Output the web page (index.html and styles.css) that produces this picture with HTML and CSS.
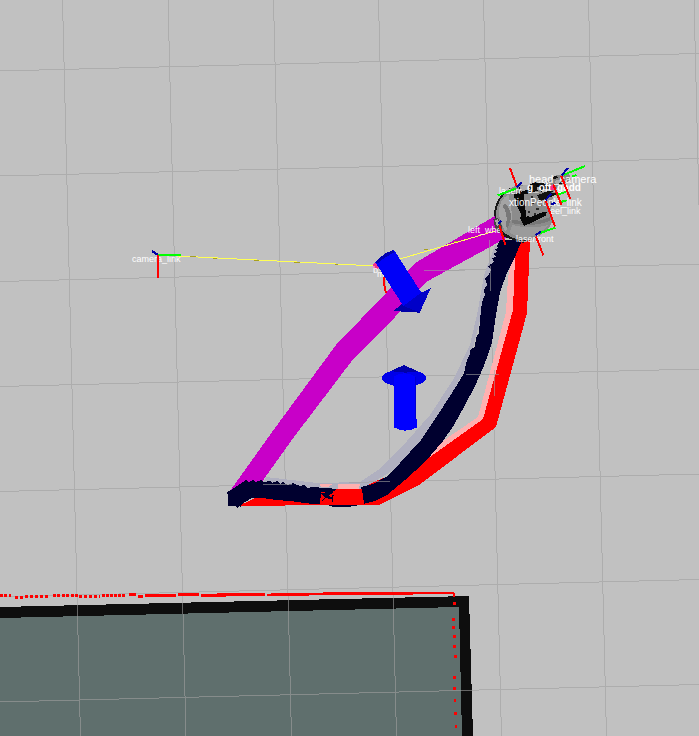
FILE: index.html
```
<!DOCTYPE html>
<html lang="en">
<head>
<meta charset="utf-8">
<title>Robot navigation view</title>
<link rel="stylesheet" href="styles.css">
</head>
<body>
<main class="view">
<svg class="scene" viewBox="0 0 699 736" role="img" aria-label="Robot navigation map">
  <!-- occupancy map -->
  <path class="wall" d="M0 607L469 596 473 736H0z"/>
  <path class="unknown" d="M0 618L459 607 462 736H0z"/>

  <!-- ground grid -->
  <path class="grid" d="M62.5 0L80.5 736M168 0L186 736M273.5 0L291.5 736M378.5 0L396.5 736M483.5 0L501.5 736M588.5 0L606.5 736M694 0L712 736M0 71L699 53.500M0 176L699 158.500M0 281.500L699 264M0 386.500L699 369M0 491.500L699 474M0 597L699 579.500M0 702L699 684.500"/>

  <!-- laser scan -->
  <path class="scan dots" stroke-dasharray="3 1 3 2" d="M0 595.500H11M53 595.500H78"/>
  <path class="scan dots" stroke-dasharray="3 2" d="M15 597.500H23M25 596.500H48M79 596.500H100"/>
  <path class="scan dots" stroke-dasharray="3 1" d="M102 595.500H126"/>
  <path class="scan dots" d="M129 594.500H136M138 596.500H143M145 595.500H176M178 594.500H199M201 595.500H226M217 594.500H265"/>
  <path class="scan" d="M267 595H309M271 594H413M323 593H454M454 593V597"/>
  <path class="scan dots" d="M453 603H456M452 619H455M452 627H455M453 636.500H456M453 646.500H456M454 656.500H457M453 677.500H456M453 688.500H456M454 700.500H456M454 713.500H457M455 726.500H457"/>

  <!-- planned paths -->
  <path class="magenta" d="M500 213L415 263 387 292 336 345 272 432 230 491 237 506 261 483 294 437 354 358 395 317 426 282 510 236z"/>
  <path class="pink" d="M514 250L508 277 506 312 478 417 437 445 420 465 440 460 486 421 514 313 520 250z"/>
  <path class="red" d="M515 240L515 257 513 310 483 419 423 462 361 487 337 489 320 487 260 496 238 506 380 504.500 419 485 496 427 527 313 530 240z"/>
  <path class="halo" d="M495 245L484 275 478 310 470 345 453 380 430 415 400 449 378 470 360 482 317 483 266 477 262 484 313 489 362 489 400 466 435 425 470 360 485 300 500 250z"/>
  <path class="pink" d="M320 484H333L328 487H321zM338 484H360L359 489H338z"/>
  <path class="navy" d="M500 240L497 246 498 248 495 249 497 252 493 254 496 257 492 258 494 262 488 266 491 270 488 276 485 278 487 285 484 290 485 295 482 302 480 320 479 333 476 338 475 347 470 350 470 354 467 360 464 373 457 385 439 413 421 440 400 463 386 477 373 484 361 487 363 504 375 501 387 495 405 480 425 462 443 441 454 425 465 405 475 386 483 368 488 355 492 343 496 315 500 292 507 273 515 257 522 240z"/>
  <path class="navy" d="M243 482L246 480 249 482 253 480 256 482 261 480 263 482 270 481 272 483 277 481 280 484 283 482 288 485 293 483 300 486 304 485 307 488 313 487 325 488 338 489 337 492 333 494 334 501 331 499 325 502 330 496 322 496 329 493 321 492 320 504 313 504 290 501 276 500 263 498 252 498 242 504 241 507 239 506 238 509 235 506 228 506 228 495 226 493 231 490zM328 505H360L348 507H333z"/>
  <path class="red" d="M337 489H362L364 504H321V494L326 499 331 493z"/>
  <path class="navy" d="M320 493L325 493 328 490 334 492 328 496 331 497 334 495 332 499 334 500 326 498 322 501 325 497zM332 495H333V502H332z"/>
  <path class="grid" d="M263 484.500L293 484M349 483L390 481M424 271L466 270M489 240L491 291M466 375L500 374M494 370L494 396"/>

  <!-- transform tree links -->
  <path class="link" d="M158 255L376 266M400 259L495 231"/>
  <path class="link tick" d="M190 256.500H196M213 258H217M254 260H259M294 262H300M335 264H338M424 250L428 249M454 242L458 241"/>
  <circle class="joint" cx="376" cy="266" r="3"/>
  <path class="axis-x" d="M384 277V284L386 293"/>
  <g class="label">
    <text x="373" y="273">b</text>
    <text x="377" y="277">m</text>
  </g>

  <!-- pose arrows -->
  <g transform="translate(350 230) scale(.3333)">
    <path fill="#0000a8" d="M130 243L160 218 242 175 209 248z"/>
    <path fill="#0000c8" d="M160 228L212 188 242 176 209 247z"/>
    <path fill="#0000f8" d="M76 97L132 60 214 188 160 228z"/>
    <path fill="#0000b0" d="M76 97L86 85 107 70 129 60 134 66 103 84 83 100z"/>
  </g>
  <g transform="translate(370 350) scale(.3333)">
    <ellipse fill="#0000e8" cx="102" cy="84" rx="66" ry="26"/>
    <path fill="#0000a8" d="M62 63L102 45 143 64Q103 72 62 63z"/>
    <path fill="#00f" d="M72 80Q103 60 136 80V207H141V232Q103 252 72 232z"/>
    <path fill="#0000d0" d="M134 82H137V207H134z"/>
  </g>

  <!-- robot -->
  <g transform="translate(460 150) scale(.3333)">
    <path fill="#181818" d="M102 194Q103 145 148 114L180 110 200 230 212 270 190 279 135 262 115 235z"/>
    <path fill="#8c8c8c" d="M107 194Q112 145 150 116Q180 98 215 106L278 142 272 195 278 215Q260 250 215 270Q175 276 145 256Q120 246 107 194z"/>
    <path fill="#a4a4a4" d="M116 185Q120 146 145 134Q155 172 157 205Q145 225 137 245Q120 220 116 185z"/>
    <path fill="#787878" d="M135 160Q155 180 153 205L143 235 137 228Q146 196 128 168zM157 209Q220 222 272 201L270 212Q215 234 155 219z"/>
    <path fill="#9b9b9b" d="M158 225Q210 240 264 225Q245 250 212 260Q170 266 148 246z"/>
    <path fill="#080808" d="M160 134L190 124 199 200 232 188 260 186 258 197 193 228 180 205 184 195 171 168zM176 113L205 106 230 94 255 108 247 125 185 134z"/>
    <path fill="#8a8a8a" d="M199 132L240 120 265 145 252 185 207 203z"/>
    <path fill="#858585" d="M252 97L275 90 282 78 326 68 334 90 302 105 275 130z"/>
    <path fill="#aaa" d="M178 108L207 104 210 117 182 126zM230 111L248 108 250 117 232 121zM284 93L304 87 312 96 288 103z"/>
    <path fill="#111" d="M232 136L272 120 292 133 240 154zM207 108L228 104 232 120 211 124zM234 99L256 101 270 116 244 118zM278 82L291 76 294 83 282 89zM300 92L314 97 298 104zM170 142H178V149H170zM176 165H184V172H176z"/>
    <path fill="#2a2a2a" d="M214 155H221V163H214zM228 174H236V181H228zM203 184H211V190H203zM242 163H247V169H242zM212 138H220V143H212zM222 190H229V195H222z"/>
    <circle class="joint" cx="276" cy="113" r="8"/>
    <path fill="#444" d="M100 208L112 202 128 231 120 250 106 236z"/>
    <path fill="#a8a8a8" d="M105 211L114 208 119 223 111 228z"/>
  </g>
  <g class="label">
    <text x="132" y="262">camera_link</text>
    <text x="468" y="233">left_whe</text>
    <text x="499" y="194">laserr</text>
    <text x="516" y="242">laserfront</text>
    <text class="medium" x="509" y="206">xtionPeople_link</text>
    <text x="550" y="214">eel_link</text>
    <text class="medium strong" x="527" y="191">g_oft_gadd</text>
    <text class="large" x="529" y="183">head_camera</text>
  </g>
  <g transform="translate(460 150) scale(.3333)">
    <path class="thick axis-y" d="M113 136L168 116M310 75L375 48M335 80L350 75M288 135L318 126M302 156L320 151M238 250L286 233"/>
    <path class="thick axis-x" d="M150 54L171 111M304 78L331 147M280 103L305 166M257 152L285 230M118 226L136 284M228 260L250 316"/>
    <path class="thick axis-z" d="M170 112L186 97M305 76L324 54M257 150L274 131M115 222L124 212M227 256L243 244M274 164L286 158"/>
  </g>
  <path class="axis-y" d="M158 255H181"/>
  <path class="axis-z" d="M152 251L158 255"/>
  <path class="axis-x" d="M158 255V278"/>
</svg>
</main>
</body>
</html>
```
FILE: styles.css
```
body { margin: 0; background: #c1c1c1; }
.view { width: 100%; overflow: hidden; }
.scene { display: block; width: 100%; height: auto; shape-rendering: crispEdges; }
.wall { fill: #0e0e0e; }
.unknown { fill: #5f6f6d; }
.grid { fill: none; stroke: #a0a0a0; stroke-opacity: .6; stroke-width: 1; }
.scan { fill: none; stroke: #f00; stroke-width: 2; }
.dots { stroke-width: 3; }
.magenta { fill: #c800c8; }
.pink { fill: #ffb0b0; }
.red { fill: #f00; }
.halo { fill: #b0b0c0; }
.navy { fill: #00002f; }
.link { fill: none; stroke: #ff5; stroke-width: 1; }
.tick { stroke: #a8a020; }
.joint { fill: #f03090; }
.axis-x, .axis-y, .axis-z { fill: none; stroke-width: 2; }
.axis-x { stroke: #f00; }
.axis-y { stroke: #0f0; }
.axis-z { stroke: #0000a8; }
.thick { stroke-width: 6; }
.label { fill: #fff; font: 9px "Liberation Sans", sans-serif; }
.medium { font-size: 10px; }
.large { font-size: 11px; }
.strong { font-weight: bold; }
```
